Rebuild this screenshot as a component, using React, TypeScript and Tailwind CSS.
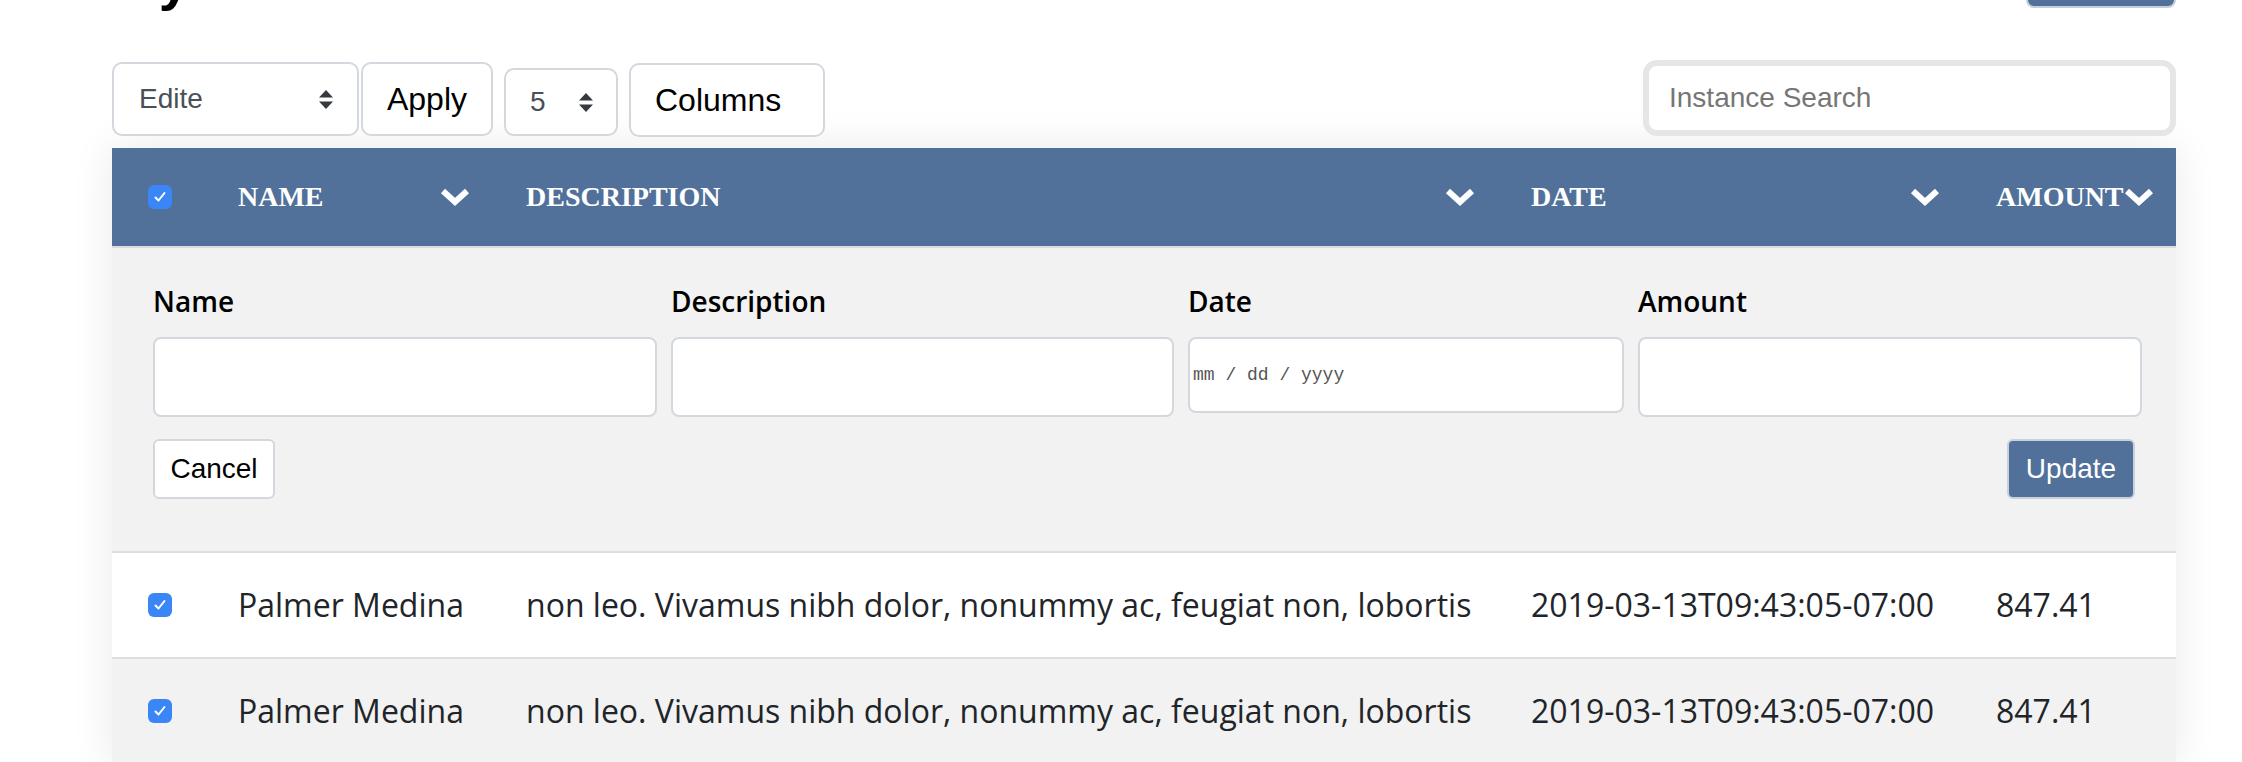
import React from 'react'

const rows = [
  { name: 'Palmer Medina', description: 'non leo. Vivamus nibh dolor, nonummy ac, feugiat non, lobortis', date: '2019-03-13T09:43:05-07:00', amount: '847.41' },
  { name: 'Palmer Medina', description: 'non leo. Vivamus nibh dolor, nonummy ac, feugiat non, lobortis', date: '2019-03-13T09:43:05-07:00', amount: '847.41' },
]

const columns = ['Name', 'Description', 'Date', 'Amount']

function Chevron() {
  return (
    <svg width="30" height="20" viewBox="0 0 30 20" className="shrink-0">
      <polyline points="3,4 15,15 27,4" fill="none" stroke="white" strokeWidth="6" />
    </svg>
  )
}

function Checkbox() {
  return (
    <span className="flex h-[24px] w-[24px] items-center justify-center rounded-[6px] bg-[#3b86f7]">
      <svg width="14" height="12" viewBox="0 0 14 12">
        <polyline points="2.5,6.5 5.5,9.5 11.5,2" fill="none" stroke="white" strokeWidth="2" strokeLinecap="round" strokeLinejoin="round" />
      </svg>
    </span>
  )
}

function UpDown() {
  return (
    <svg width="16" height="21" viewBox="0 0 16 21" className="shrink-0">
      <path d="M8 1 L15 8.5 H1 Z M1 12.5 H15 L8 20 Z" fill="#343a40" />
    </svg>
  )
}

export default function App() {
  return (
    <div className="min-h-screen w-full overflow-hidden bg-white font-['Liberation_Sans',Arial,sans-serif]">
      {/* Page title, scrolled mostly out of view */}
      <div className="-mt-[80px] flex h-[88px] items-end justify-between pl-[112px] pr-[66px]">
        <h1 className="text-[56px] font-bold leading-none text-black">My Table</h1>
        <button className="h-[60px] w-[150px] rounded-[8px] border-2 border-[#c5cfdc] bg-[#52719a] text-[28px] text-white">Add</button>
      </div>

      {/* Toolbar */}
      <div className="ml-[112px] mt-[52px] flex h-[76px] w-[2064px] items-end justify-between">
        <div className="flex items-end">
          <div className="flex h-[74px] w-[247px] items-center justify-between rounded-[10px] border-2 border-[#d3d8de] bg-white pl-[25px] pr-[23px] text-[28px] text-[#495057]">
            <span>Edite</span>
            <UpDown />
          </div>
          <button className="ml-[2px] h-[74px] w-[132px] rounded-[10px] border-2 border-[#d3d8de] bg-white text-[32px] text-black">Apply</button>
          <div className="ml-[11px] flex h-[68px] w-[114px] items-center justify-between rounded-[10px] border-2 border-[#d3d8de] bg-white pl-[24px] pr-[22px] text-[28px] text-[#495057]">
            <span>5</span>
            <UpDown />
          </div>
          <button className="mb-[-1px] ml-[11px] h-[74px] w-[196px] rounded-[10px] border-2 border-[#d3d8de] bg-white pl-[24px] text-left text-[32px] text-black">Columns</button>
        </div>
        <input
          placeholder="Instance Search"
          className="h-[76px] w-[533px] rounded-[14px] border-[6px] border-[#e6e6e6] bg-white pl-[20px] text-[28px] outline-none placeholder:text-[#767676]"
        />
      </div>

      {/* Table */}
      <div className="ml-[112px] mt-[12px] w-[2064px] shadow-[0_0_40px_rgba(0,0,0,0.09)]">
        <div className="grid h-[100px] grid-cols-[98px_288px_1005px_465px_208px] border-b-2 border-[#dcdcdc] bg-[#52719a]">
          <div className="flex items-center pl-[36px]">
            <Checkbox />
          </div>
          {columns.map((c) => (
            <div key={c} className="flex items-center justify-between pl-[28px] pr-[28px]">
              <span className="whitespace-nowrap font-['Liberation_Serif','Times_New_Roman',serif] text-[28px] font-bold uppercase text-white">{c}</span>
              <Chevron />
            </div>
          ))}
        </div>

        {/* Inline edit panel */}
        <div className="bg-[#f2f2f2] pb-[52px] pl-[41px] pr-[33px] pt-[32px] font-['Open_Sans',sans-serif]">
          <div className="grid grid-cols-[504px_503px_436px_504px] items-start gap-x-[14px]">
            {columns.map((c) => (
              <label key={c} className="flex flex-col">
                <span className="text-[28px] font-semibold leading-[42px] text-black">{c}</span>
                {c === 'Date' ? (
                  <input
                    placeholder="mm / dd / yyyy"
                    className="mt-[15px] h-[76px] rounded-[8px] border-2 border-[#d3d8de] bg-white pl-[3px] font-['Liberation_Mono','Courier_New',monospace] text-[18px] outline-none placeholder:text-[#555]"
                  />
                ) : (
                  <input className="mt-[15px] h-[80px] rounded-[8px] border-2 border-[#d3d8de] bg-white outline-none" />
                )}
              </label>
            ))}
          </div>
          <div className="mt-[22px] flex justify-between pr-[8px] font-['Liberation_Sans',Arial,sans-serif]">
            <button className="h-[60px] w-[122px] rounded-[6px] border-2 border-[#d3d8de] bg-white text-[28px] text-black">Cancel</button>
            <button className="h-[60px] w-[128px] rounded-[6px] border-2 border-[#c9d1db] bg-[#52719a] text-[28px] text-white">Update</button>
          </div>
        </div>

        {/* Rows */}
        {rows.map((r, i) => (
          <div
            key={i}
            className={`grid h-[106px] grid-cols-[98px_288px_1005px_465px_208px] border-t-2 border-[#dedede] font-['Open_Sans',sans-serif] text-[32px] text-[#212529] ${i % 2 === 0 ? 'bg-white' : 'bg-[#f2f2f2]'}`}
          >
            <div className="flex items-center pl-[36px]">
              <Checkbox />
            </div>
            <div className="flex items-center overflow-hidden whitespace-nowrap pl-[28px]">{r.name}</div>
            <div className="flex items-center overflow-hidden whitespace-nowrap pl-[28px]">{r.description}</div>
            <div className="flex items-center overflow-hidden whitespace-nowrap pl-[28px]">{r.date}</div>
            <div className="flex items-center overflow-hidden whitespace-nowrap pl-[28px]">{r.amount}</div>
          </div>
        ))}
      </div>
    </div>
  )
}
